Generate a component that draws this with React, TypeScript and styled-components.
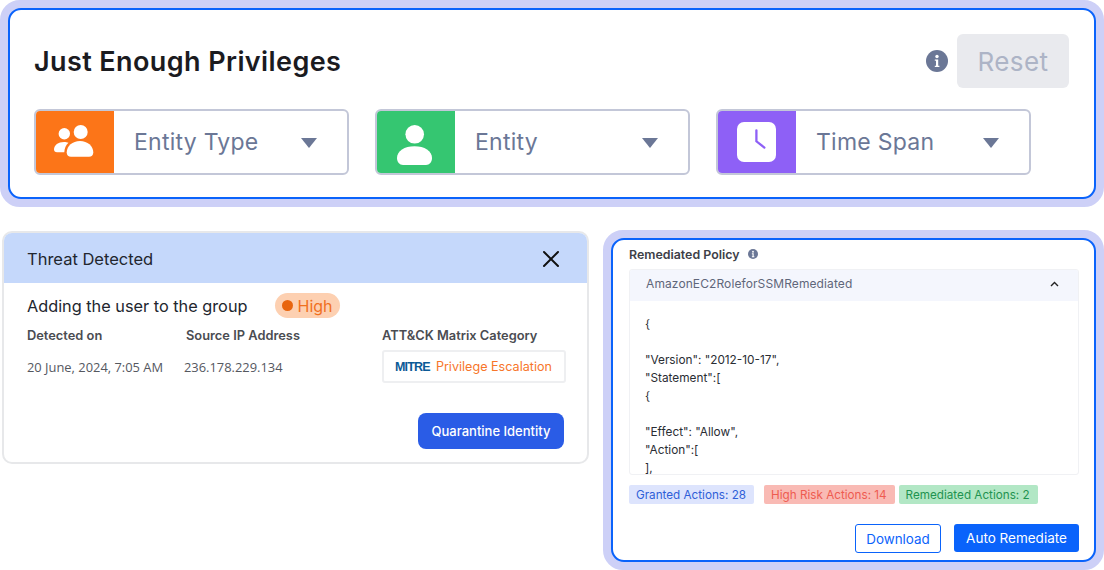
import React from "react";
import styled, { createGlobalStyle } from "styled-components";

const Global = createGlobalStyle`
  html, body { margin: 0; padding: 0; background: #fff; }
  body { font-family: Inter, "Noto Sans", sans-serif; width: 1104px; height: 570px; overflow: hidden; }
  * { box-sizing: border-box; }
`;

const Page = styled.div`
  width: 1104px;
  height: 570px;
  display: flex;
  flex-direction: column;
  gap: 23px;
`;

const Halo = styled.section<{ $w: number; $h: number }>`
  width: ${(p) => p.$w}px;
  height: ${(p) => p.$h}px;
  flex: none;
  border: 8px solid #cdd0f7;
  border-radius: 20px;
  background: #cdd0f7;
`;

const Framed = styled.div`
  height: 100%;
  background: #fff;
  border: 2px solid #0a63fb;
  border-radius: 13px;
`;

const TopInner = styled(Framed)`
  padding: 24px 25px 22px 24px;
  display: flex;
  flex-direction: column;
  gap: 21px;
`;

const TitleRow = styled.div`
  display: flex;
  align-items: center;
  height: 54px;
`;

const Title = styled.h1`
  margin: 0;
  flex: 1;
  font-size: 27px;
  font-weight: 600;
  color: #1b1b1f;
  letter-spacing: 0.4px;
`;

const InfoBadge = styled.svg`
  width: 22px;
  height: 22px;
  margin-right: 9px;
`;

const ResetButton = styled.button`
  width: 112px;
  height: 54px;
  border: 0;
  border-radius: 6px;
  background: #e9eaee;
  color: #adb4c6;
  font: 400 26px Inter, sans-serif;
  letter-spacing: 0.4px;
`;

const Selects = styled.div`
  display: flex;
  gap: 26px;
`;

const Select = styled.div`
  width: 315px;
  height: 66px;
  border: 2px solid #c3c7d8;
  border-radius: 6px;
  display: flex;
  align-items: center;
  overflow: hidden;
`;

const IconTile = styled.div<{ $bg: string }>`
  width: 78px;
  height: 100%;
  background: ${(p) => p.$bg};
  display: flex;
  align-items: center;
  justify-content: center;
`;

const SelectLabel = styled.span`
  flex: 1;
  padding-left: 20px;
  font-size: 23px;
  color: #6b7796;
  letter-spacing: 0.25px;
`;

const Caret = styled.span`
  width: 0;
  height: 0;
  margin-right: 30px;
  border-left: 8.5px solid transparent;
  border-right: 8.5px solid transparent;
  border-top: 10px solid #6b7796;
  margin-top: 1px;
`;

const TileIcon = styled.svg<{ $m: string }>`
  margin: ${(p) => p.$m};
`;

const Bottom = styled.div`
  display: flex;
  align-items: flex-start;
`;

const ThreatCard = styled.section`
  width: 587px;
  height: 233px;
  margin: 1px 0 0 2px;
  border: 2px solid #e7e8ea;
  border-radius: 10px;
  overflow: hidden;
  background: #fff;
`;

const ThreatHeader = styled.header`
  height: 50px;
  background: #c5d8fb;
  display: flex;
  align-items: center;
  justify-content: space-between;
  padding: 2px 27px 0 23px;
  font-size: 16.5px;
  color: #22262e;
`;

const ThreatBody = styled.div`
  padding: 10px 23px 0 23px;
`;

const ThreatTitleRow = styled.div`
  display: flex;
  align-items: center;
  gap: 28px;
  font-size: 16.3px;
  color: #22262e;
`;

const SeverityPill = styled.span`
  display: inline-flex;
  align-items: center;
  gap: 4px;
  height: 25px;
  padding: 0 7px;
  background: #fdd0b1;
  border-radius: 13px;
  color: #f0701f;
  font-size: 16px;
`;

const SeverityDot = styled.i`
  width: 11px;
  height: 11px;
  border-radius: 50%;
  background: #e8650e;
`;

const Facts = styled.div`
  display: grid;
  grid-template-columns: 157px 198px 1fr;
  margin-top: 10px;
`;

const FactLabel = styled.div<{ $shift?: number }>`
  font-size: 12.85px;
  font-weight: 600;
  color: #4a4c52;
  height: 18px;
  margin-left: ${(p) => p.$shift ?? 0}px;
`;

const FactValue = styled.div`
  font: 400 12.9px "Open Sans", sans-serif;
  color: #55585f;
  height: 33px;
  margin-top: 4px;
  display: flex;
  align-items: center;
`;

const MitreBox = styled.div`
  width: 184px;
  height: 33px;
  margin-top: 4px;
  border: 2px solid #eeeff1;
  border-radius: 3px;
  display: flex;
  align-items: center;
  padding-left: 11px;
  gap: 6px;
  font-size: 12.6px;
  color: #f7762a;
  white-space: nowrap;
`;

const MitreMark = styled.span`
  font: 700 12.5px "Liberation Sans", sans-serif;
  color: #0b5a96;
  letter-spacing: -0.8px;
`;

const ThreatFooter = styled.div`
  display: flex;
  justify-content: flex-end;
  margin-top: 30px;
`;

const QuarantineButton = styled.button`
  width: 146px;
  height: 36px;
  border: 0;
  border-radius: 8px;
  background: #2a5ce6;
  color: #fff;
  font: 500 13px Inter, sans-serif;
`;

const PolicySpacer = styled.div`
  width: 14px;
  flex: none;
`;

const PolicyInner = styled(Framed)`
  padding: 4px 15px 0 16px;
  display: flex;
  flex-direction: column;
`;

const PolicyLabel = styled.div`
  display: flex;
  align-items: center;
  gap: 9px;
  height: 20px;
  font-size: 12.4px;
  font-weight: 600;
  color: #3d4047;
`;

const Accordion = styled.div`
  margin-top: 5px;
  height: 206px;
  border: 1px solid #f0f1f4;
  border-radius: 3px;
  overflow: hidden;
`;

const AccordionHead = styled.div`
  height: 31px;
  background: #f4f6fd;
  display: flex;
  align-items: center;
  justify-content: space-between;
  padding: 0 19px 4px 16px;
  font-size: 12px;
  color: #5f667a;
  letter-spacing: 0.1px;
`;

const CodeBlock = styled.pre`
  margin: 0;
  padding: 14px 15px 0;
  font: 400 11.8px/18px Inter, sans-serif;
  color: #2a2d33;
`;

const Tags = styled.div`
  display: flex;
  margin-top: 10px;
`;

const Tag = styled.span<{ $bg: string; $fg: string; $gap: number }>`
  height: 19px;
  display: flex;
  align-items: center;
  padding: 0 8px 0 7px;
  margin-right: ${(p) => p.$gap}px;
  background: ${(p) => p.$bg};
  color: ${(p) => p.$fg};
  font-size: 11.7px;
  border-radius: 2px;
`;

const PolicyActions = styled.div`
  display: flex;
  justify-content: flex-end;
  gap: 13px;
  margin-top: 20px;
`;

const OutlineButton = styled.button`
  width: 86px;
  height: 29px;
  background: #fff;
  border: 1px solid #0a63fb;
  border-radius: 3px;
  color: #0a63fb;
  font: 400 13.4px Inter, sans-serif;
`;

const PrimaryButton = styled.button`
  width: 125px;
  height: 28px;
  background: #0a63fb;
  border: 0;
  border-radius: 3px;
  color: #fff;
  font: 400 13.5px Inter, sans-serif;
`;

const UsersIcon = () => (
  <TileIcon $m="0 2px 2px 0" width="40" height="32" viewBox="0 0 40 32" fill="#fff">
    <circle cx="10.3" cy="8.7" r="5.7" />
    <circle cx="26.7" cy="7" r="7" />
    <path d="M0 24.500C0 20 4.300 17 10 17c1.800 0 3 .2 4.500.8-2.500 2.300-4 5-4.200 9.500H3c-2 0-3-1.200-3-2.800z" />
    <path d="M12.700 27.500C12.700 21 18.500 16 26 16s13.300 5 13.300 11.500c0 2.700-1.800 4.300-4.300 4.300H17c-2.500 0-4.300-1.600-4.300-4.300z" />
  </TileIcon>
);

const UserIcon = () => (
  <TileIcon $m="6px 3px 0 0" width="35" height="40" viewBox="0 0 35 40" fill="#fff">
    <circle cx="17.7" cy="9.3" r="9.300" />
    <path d="M0 33C0 26 7.500 21.300 17.500 21.300S35 26 35 33c0 4-2.500 7-6 7H6c-3.500 0-6-3-6-7z" />
  </TileIcon>
);

const ClockIcon = () => (
  <TileIcon $m="0 2px 0 0" width="39" height="40" viewBox="0 0 39 40">
    <rect width="39" height="40" rx="7" fill="#fff" />
    <path d="M19.400 8.300v11l8 6.300" fill="none" stroke="#8e60f6" strokeWidth="2.300" strokeLinecap="round" />
  </TileIcon>
);

const selects = [
  { label: "Entity Type", bg: "#fc7518", icon: <UsersIcon /> },
  { label: "Entity", bg: "#35c671", icon: <UserIcon /> },
  { label: "Time Span", bg: "#8e60f6", icon: <ClockIcon /> },
];

const code = `{

"Version": "2012-10-17",
"Statement":[
{

"Effect": "Allow",
"Action":[
],`;

export default function App() {
  return (
    <Page>
      <Global />
      <Halo $w={1104} $h={207}>
        <TopInner>
          <TitleRow>
            <Title>Just Enough Privileges</Title>
            <InfoBadge viewBox="0 0 22 22">
              <circle cx="11" cy="11" r="11" fill="#6b7796" />
              <circle cx="11" cy="6.500" r="1.700" fill="#fff" />
              <path d="M8.800 9.500h3.400v6.200h1.200v1.300H8.800v-1.300H10v-4.900H8.800z" fill="#fff" />
            </InfoBadge>
            <ResetButton>Reset</ResetButton>
          </TitleRow>
          <Selects>
            {selects.map((s) => (
              <Select key={s.label}>
                <IconTile $bg={s.bg}>{s.icon}</IconTile>
                <SelectLabel>{s.label}</SelectLabel>
                <Caret />
              </Select>
            ))}
          </Selects>
        </TopInner>
      </Halo>
      <Bottom>
        <ThreatCard>
          <ThreatHeader>
            Threat Detected
            <svg width="18" height="18" viewBox="0 0 18 18">
              <path d="M2 2l14 14M16 2L2 16" stroke="#111" strokeWidth="2" strokeLinecap="round" />
            </svg>
          </ThreatHeader>
          <ThreatBody>
            <ThreatTitleRow>
              Adding the user to the group
              <SeverityPill>
                <SeverityDot />
                High
              </SeverityPill>
            </ThreatTitleRow>
            <Facts>
              <FactLabel>Detected on</FactLabel>
              <FactLabel $shift={2}>Source IP Address</FactLabel>
              <FactLabel>ATT&amp;CK Matrix Category</FactLabel>
              <FactValue>20 June, 2024, 7:05 AM</FactValue>
              <FactValue>236.178.229.134</FactValue>
              <MitreBox>
                <MitreMark>MITRE</MitreMark>
                Privilege Escalation
              </MitreBox>
            </Facts>
            <ThreatFooter>
              <QuarantineButton>Quarantine Identity</QuarantineButton>
            </ThreatFooter>
          </ThreatBody>
        </ThreatCard>
        <PolicySpacer />
        <Halo $w={501} $h={340}>
          <PolicyInner>
            <PolicyLabel>
              Remediated Policy
              <svg width="10" height="10" viewBox="0 0 22 22">
                <circle cx="11" cy="11" r="11" fill="#6b7796" />
                <circle cx="11" cy="6" r="2" fill="#fff" />
                <path d="M8.500 9.500h4v6.500h1.500v2H8.500v-2H10v-4.500H8.500z" fill="#fff" />
              </svg>
            </PolicyLabel>
            <Accordion>
              <AccordionHead>
                AmazonEC2RoleforSSMRemediated
                <svg width="9" height="6" viewBox="0 0 9 6">
                  <path d="M1 5l3.500-3.500L8 5" fill="none" stroke="#222" strokeWidth="1.400" />
                </svg>
              </AccordionHead>
              <CodeBlock>{code}</CodeBlock>
            </Accordion>
            <Tags>
              <Tag $bg="#dde4fd" $fg="#2f5fd8" $gap={10}>Granted Actions: 28</Tag>
              <Tag $bg="#f9bab4" $fg="#ee5b50" $gap={4}>High Risk Actions: 14</Tag>
              <Tag $bg="#b2e7c5" $fg="#1f9350" $gap={0}>Remediated Actions: 2</Tag>
            </Tags>
            <PolicyActions>
              <OutlineButton>Download</OutlineButton>
              <PrimaryButton>Auto Remediate</PrimaryButton>
            </PolicyActions>
          </PolicyInner>
        </Halo>
      </Bottom>
    </Page>
  );
}
